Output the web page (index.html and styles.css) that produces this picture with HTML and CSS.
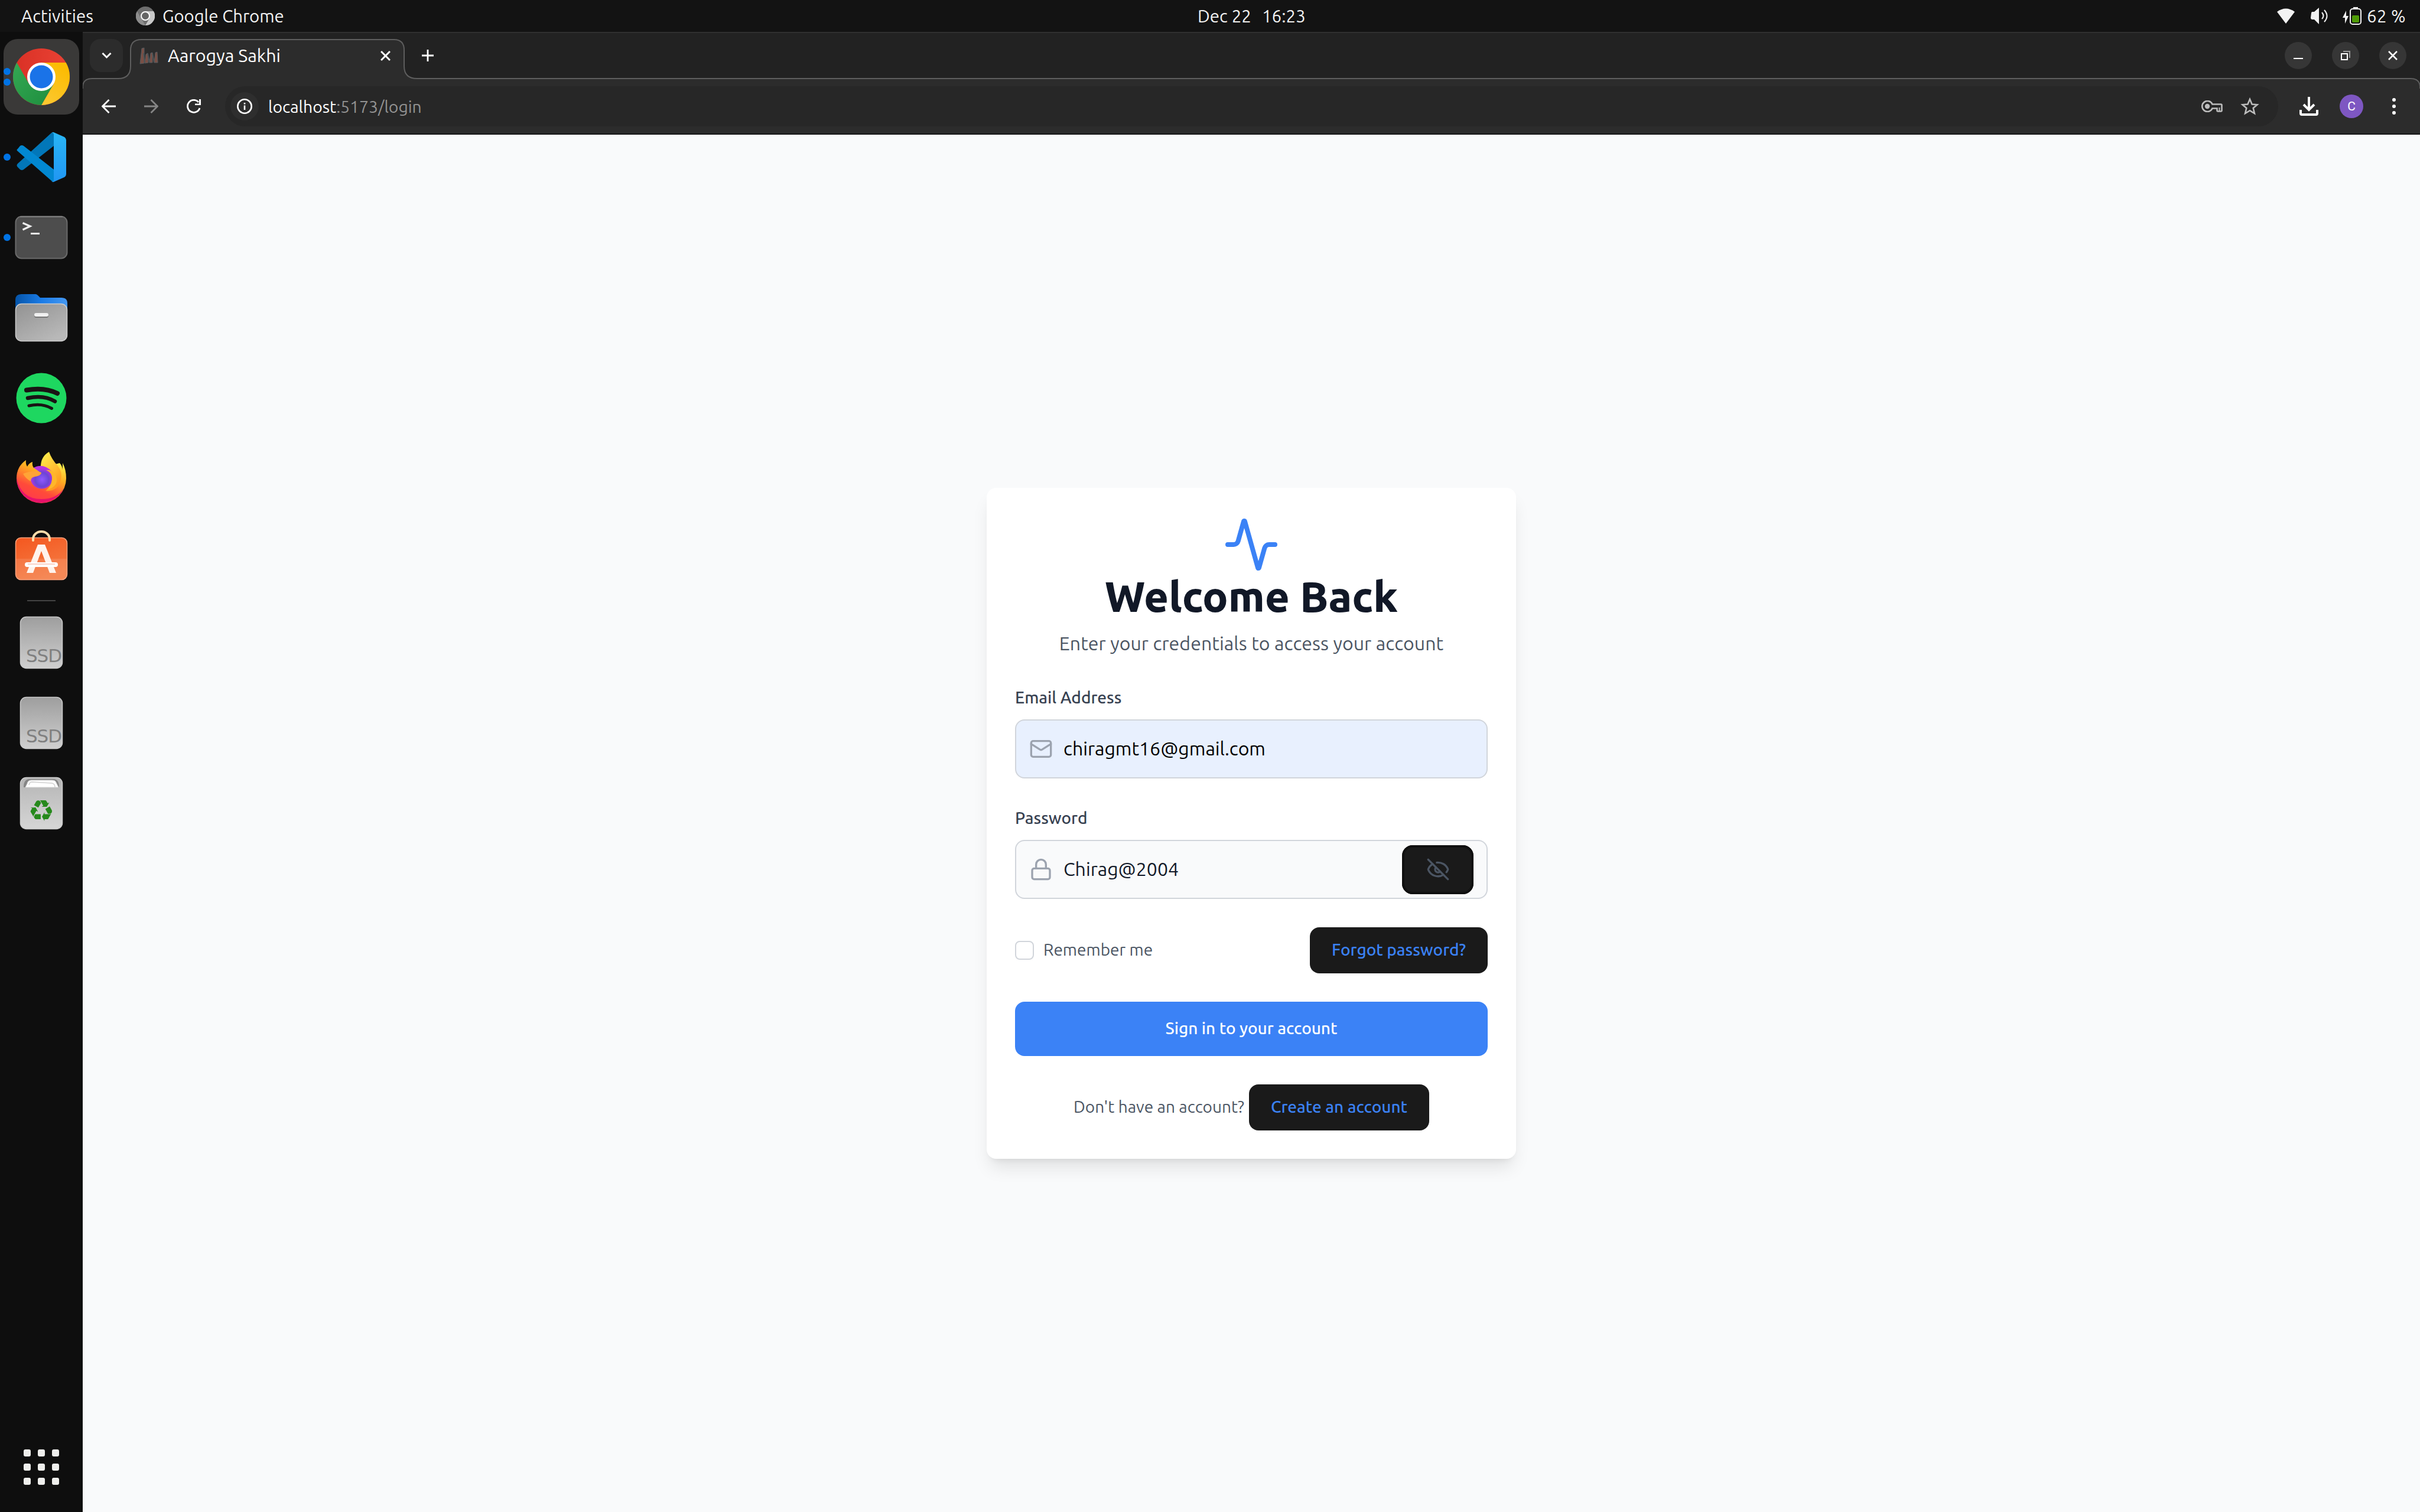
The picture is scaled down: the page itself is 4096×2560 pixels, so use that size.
FILE: index.html
```html
<!DOCTYPE html>
<html lang="en">
<head>
<meta charset="utf-8">
<title>Aarogya Sakhi</title>
<link rel="stylesheet" href="styles.css">
</head>
<body>
<div class="desktop">
  <header class="topbar">
    <span class="t activities">Activities</span>
    <svg class="app-icon" viewBox="0 0 32 32"><circle cx="16" cy="16" r="16" fill="#6e6e6e"/><path d="M16 8H30A16 16 0 0 1 16 32L23 20Z" fill="#c8c8c8"/><path d="M2 8L9 20L16 32A16 16 0 0 1 2 8Z" fill="#8d8d8d"/><circle cx="16" cy="16" r="7" fill="#666" stroke="#fff" stroke-width="2"/></svg>
    <span class="t app-name">Google Chrome</span>
    <div class="clock"><span class="t">Dec 22</span><span class="t">16:23</span></div>
    <div class="status">
      <svg class="st-wifi" viewBox="0 0 30 26"><path d="M0 6Q15-5 30 6L15 26Z" fill="#f2f2f2"/></svg>
      <svg class="st-vol" viewBox="0 0 30 28"><path d="M1 9Q1 7 3 7H6L14 0V28L6 20H3Q0 20 0 17Z" fill="#f2f2f2"/><path d="M19 8Q24 14 19 19M23 4Q32 14 23 24" fill="none" stroke="#f2f2f2" stroke-width="2"/></svg>
      <svg class="st-bat" viewBox="0 0 32 30"><path d="M6 6L0 18H4L4 28L10 15H6Z" fill="#f2f2f2"/><rect x="18" y="0" width="8" height="3" fill="#f2f2f2"/><rect x="13" y="3" width="18" height="26" rx="4" fill="none" stroke="#f2f2f2" stroke-width="2"/><rect x="16" y="14" width="12" height="12" rx="2" fill="#4e9a06"/></svg>
      <span class="t pct">62 %</span>
    </div>
  </header>
  <div class="main">
    <aside class="dock">
      <div class="tile active"><i class="dot up"></i><i class="dot down"></i>
        <svg viewBox="0 0 96 96"><defs><linearGradient id="cr"><stop stop-color="#d93025"/><stop offset="1" stop-color="#ea4335"/></linearGradient><linearGradient id="cg" x1="1" y1="1" x2="0" y2="0"><stop stop-color="#1e8e3e"/><stop offset="1" stop-color="#34a853"/></linearGradient><linearGradient id="cy" x1="0" y1="1" x2="0.5" y2="0"><stop stop-color="#fcc934"/><stop offset="1" stop-color="#fbbc04"/></linearGradient></defs><circle cx="48" cy="48" r="48" fill="url(#cr)"/><path d="M48 24H89.6A48 48 0 0 1 48 96L68.8 60Z" fill="url(#cy)"/><path d="M6.4 24A48 48 0 0 0 48 96L68.8 60L27.2 60Z" fill="url(#cg)"/><circle cx="48" cy="48" r="24" fill="#fff"/><circle cx="48" cy="48" r="19.5" fill="#1a73e8"/></svg>
      </div>
      <div class="tile"><i class="dot"></i>
        <svg viewBox="0 0 96 96"><defs><linearGradient id="vb" x2="0" y2="1"><stop stop-color="#29b6f6"/><stop offset="1" stop-color="#2196f3"/></linearGradient></defs><path d="M65 7L8 59Q5 62 8 65L12 69Q15 71 18 69L69 29V6Z" fill="#0277b9"/><path d="M8 34L12 29Q15 27 18 29L69 69V90Q67 90 65 88L8 38Q5 36 8 34Z" fill="#0288d1"/><path d="M65 6.500Q68 5 70 6.500L87 14Q90 16 90 19V77Q90 80 87 82L70 89.500Q68 91 65 89.500Q69 90 69 86V10Q69 6 65 6.500Z" fill="url(#vb)"/></svg>
      </div>
      <div class="tile"><i class="dot"></i>
        <svg viewBox="0 0 96 96"><rect x="4.500" y="12.500" width="87" height="71" rx="10" fill="#4d4d4d" stroke="#6b6b6b" stroke-width="2"/><path d="M12 13H84" stroke="#888" stroke-width="1.500"/><path d="M16.500 23.500L29 29L16.500 35M30 41.500H45" fill="none" stroke="#eee" stroke-width="3.200"/></svg>
      </div>
      <div class="tile">
        <svg viewBox="0 0 96 96"><defs><linearGradient id="fb"><stop stop-color="#0554a8"/><stop offset=".5" stop-color="#1a7be6"/><stop offset="1" stop-color="#4598f2"/></linearGradient><linearGradient id="fg" x2=".7" y2="1"><stop stop-color="#929292"/><stop offset="1" stop-color="#b9b9b9"/></linearGradient></defs><path d="M4 40V18Q4 8 14 8H38Q40 8 42 10L46 14H82Q92 14 92 23V40Z" fill="url(#fb)"/><rect x="4.500" y="24.500" width="87" height="63" rx="10" fill="url(#fg)" stroke="#ccc" stroke-width="1.500"/><rect x="36" y="41" width="24" height="7" rx="3" fill="#777"/><rect x="36" y="40" width="24" height="6" rx="3" fill="#f0f0f0"/></svg>
      </div>
      <div class="tile">
        <svg viewBox="0 0 96 96"><circle cx="48" cy="48" r="42.500" fill="#1ed760"/><g fill="none" stroke="#191414" stroke-linecap="round"><path d="M23 34.500Q53 29 75 40" stroke-width="8"/><path d="M25 48Q52 42 71 53.500" stroke-width="6.500"/><path d="M27 61Q49 56 65.500 65.500" stroke-width="5"/></g></svg>
      </div>
      <div class="tile">
        <svg viewBox="0 0 96 96"><defs><linearGradient id="ff" x1=".8" y1="0" x2=".3" y2="1"><stop stop-color="#fff44f"/><stop offset=".35" stop-color="#ffae21"/><stop offset=".7" stop-color="#ff4a3a"/><stop offset="1" stop-color="#ff3750"/></linearGradient><linearGradient id="fy" x2=".5" y2="1"><stop stop-color="#fff44f"/><stop offset="1" stop-color="#ff9a1f"/></linearGradient><radialGradient id="fp" cx=".5" cy=".6"><stop stop-color="#9059ff"/><stop offset=".6" stop-color="#6b46d4"/><stop offset="1" stop-color="#b833e1"/></radialGradient></defs><path d="M6 48Q6 28 22 17Q21 23 24 28Q27 22 33 20Q32 26 35 30Q47 25 60 27L79 22Q84 28 84 34V22Q90 33 90 48A42 42 0 0 1 6 48Z" fill="url(#ff)"/><path d="M6 48Q14 83 48 83Q74 83 86 65A42 42 0 0 1 6 48Z" fill="#e30b72" opacity=".85"/><path d="M47 28Q47 11 61 3Q65 15 76 27Q84 37 81 50Q76 71 55 69Q76 61 73 47Q71 35 58 34Z" fill="url(#fy)"/><path d="M35 30Q50 21 66 36Q73 49 61 61Q49 70 36 61Q27 52 31 44Q46 46 48 39Q42 35 35 30Z" fill="url(#fp)"/><path d="M17 40Q35 33 48 38Q45 44 37 45Q30 46 30 53Q21 48 17 40Z" fill="#ffa436"/><path d="M56 34Q67 38 66 50Q64 63 56 68Q78 62 73 45Q69 32 56 34Z" fill="#ffb62a"/></svg>
      </div>
      <div class="tile">
        <svg viewBox="0 0 96 96"><defs><linearGradient id="so" x2=".4" y2="1"><stop stop-color="#f4571f"/><stop offset="1" stop-color="#f47b43"/></linearGradient></defs><rect x="4.500" y="12.500" width="87" height="71" rx="9" fill="url(#so)" stroke="#f8a07a" stroke-width="1.500"/><path d="M5 48H91V75Q91 83 82 83H14Q5 83 5 75Z" fill="#fff" opacity=".1"/><path d="M34 17V15A14 13 0 0 1 62 15V17" fill="none" stroke="#fbdcaa" stroke-width="4" stroke-linecap="round"/><path d="M42 24H54L73 72H62L48 35L34 72H23Z" fill="#fff3ec"/><rect x="20" y="54" width="56" height="8" rx="4" fill="#fff"/><path d="M25 57H71" stroke="#fad0c4" stroke-width="2"/></svg>
      </div>
      <div class="rule"></div>
      <div class="tile">
        <svg viewBox="0 0 96 96"><defs><linearGradient id="sd" x2="0" y2="1"><stop stop-color="#9e9e9e"/><stop offset="1" stop-color="#cfcfcf"/></linearGradient></defs><rect x="12.500" y="4.500" width="71" height="87" rx="10" fill="url(#sd)" stroke="#c9c9c9" stroke-width="1.500"/><text class="ssd" x="22" y="81" textLength="61">SSD</text></svg>
      </div>
      <div class="tile">
        <svg viewBox="0 0 96 96"><rect x="12.500" y="4.500" width="71" height="87" rx="10" fill="url(#sd)" stroke="#c9c9c9" stroke-width="1.500"/><text class="ssd" x="22" y="81" textLength="61">SSD</text></svg>
      </div>
      <div class="tile">
        <svg viewBox="0 0 96 96"><defs><linearGradient id="tr" x2="0" y2="1"><stop stop-color="#b5b5b5"/><stop offset="1" stop-color="#d6d6d6"/></linearGradient></defs><rect x="12.500" y="4.500" width="71" height="87" rx="10" fill="url(#tr)" stroke="#ccc" stroke-width="1.500"/><path d="M18 21Q18 7 28 7H68Q78 7 78 21Z" fill="#858585"/><path d="M24 15Q25 9 31 9H66Q72 9 73 13L77 21H21Z" fill="#fff" stroke="#d5d5d5"/><path d="M27 17Q28 12 32 12L66 14Q71 15 71 21" fill="none" stroke="#d0d0d0" stroke-width="1.500"/><text class="recycle" x="48" y="78">♻</text></svg>
      </div>
      <svg class="grid-icon" viewBox="0 0 60 60" fill="#eeeeec"><rect width="12" height="12" rx="3"/><rect x="24" width="12" height="12" rx="3"/><rect x="48" width="12" height="12" rx="3"/><rect y="24" width="12" height="12" rx="3"/><rect x="24" y="24" width="12" height="12" rx="3"/><rect x="48" y="24" width="12" height="12" rx="3"/><rect y="48" width="12" height="12" rx="3"/><rect x="24" y="48" width="12" height="12" rx="3"/><rect x="48" y="48" width="12" height="12" rx="3"/></svg>
    </aside>
    <section class="browser">
      <div class="tabstrip">
        <svg class="tab-shape" viewBox="0 0 3956 96" preserveAspectRatio="none"><path d="M0 96V92Q1 79 16 79H60Q81 79 81 58V31Q81 13 99 13H527Q544 13 544 31V58Q544 79 566 79H3940Q3955 79 3956 92V96" fill="#2c2c2c" stroke="#5e5e5e" stroke-width="2"/></svg>
        <div class="tab-search"><svg viewBox="0 0 16 16"><path d="M1 4L8 11L15 4" fill="none" stroke="#fff" stroke-width="3"/></svg></div>
        <svg class="favicon" viewBox="0 0 32 32"><path d="M1 30L4 4L8 3L8 29ZM9 29L11 14L14 12L15 28ZM17 28L19 12L22 11L22 28ZM25 28L27 11L30 10L31 28Z" fill="#7a4f45" stroke="#565c60" stroke-width="1"/><path d="M7 12L9 29M14 13L17 28M22 12L25 28" stroke="#4d5457" stroke-width="2"/></svg>
        <span class="t tab-title">Aarogya Sakhi</span>
        <svg class="tab-close" viewBox="0 0 16 16"><path d="M1 1L15 15M15 1L1 15" stroke="#fff" stroke-width="2.800"/></svg>
        <svg class="tab-new" viewBox="0 0 20 20"><path d="M10 0V20M0 10H20" stroke="#fff" stroke-width="2.800"/></svg>
        <div class="window-buttons">
          <div class="wb"><svg viewBox="0 0 16 16"><path d="M0 13H16" stroke="#fff" stroke-width="2"/></svg></div>
          <div class="wb"><svg viewBox="0 0 16 16"><path d="M4 1H15V12" fill="none" stroke="#9a9a9a" stroke-width="2"/><rect x="1" y="5" width="10" height="10" fill="none" stroke="#fff" stroke-width="2"/></svg></div>
          <div class="wb"><svg viewBox="0 0 16 16"><path d="M1 1L15 15M15 1L1 15" stroke="#fff" stroke-width="2.500"/></svg></div>
        </div>
      </div>
      <div class="toolbar">
        <svg class="nav" viewBox="0 0 24 24"><path d="M24 12H2M12.500 1L1.500 12L12.500 23" fill="none" stroke="#fff" stroke-width="2.800"/></svg>
        <svg class="nav dim" viewBox="0 0 24 24"><path d="M0 12H22M11.500 1L22.500 12L11.500 23" fill="none" stroke="#858585" stroke-width="2.800"/></svg>
        <svg class="nav reload" viewBox="0 0 24 24"><path d="M22 15A10.500 10.500 0 1 1 20 5" fill="none" stroke="#fff" stroke-width="2.800"/><path d="M24 0V10H14V7.500H21V0Z" fill="#fff"/></svg>
        <div class="omnibox">
          <div class="site-info"><svg viewBox="0 0 26 26"><circle cx="13" cy="13" r="11.700" fill="none" stroke="#fff" stroke-width="2.600"/><path d="M13 11.500V19M13 7V9.500" stroke="#fff" stroke-width="2.600"/></svg></div>
          <span class="t url">localhost<span class="path">:5173/login</span></span>
          <svg class="key" viewBox="0 0 36 20"><path d="M18.500 6.500H33Q34.500 6.500 34.500 8V17Q34.500 18.500 33 18.500H28Q26.500 18.500 26.500 17V13.500H18.500A9 9 0 1 1 18.500 6.500Z" fill="none" stroke="#bdbdbd" stroke-width="2.600"/><circle cx="10" cy="10" r="4.200" fill="#bdbdbd"/><path d="M30.500 12V18" stroke="#bdbdbd" stroke-width="2"/></svg>
          <svg class="star" viewBox="0 0 32 30"><path d="M16 3L19.600 11.500L28.500 12.200L21.700 18L23.900 27L16 22.200L8.100 27L10.300 18L3.500 12.200L12.400 11.500Z" fill="none" stroke="#bdbdbd" stroke-width="2.600"/></svg>
        </div>
        <svg class="download" viewBox="0 0 32 32"><path d="M16 0V21M7 13L16 22L25 13" fill="none" stroke="#fff" stroke-width="4"/><path d="M2 22V28Q2 30 4 30H28Q30 30 30 28V22" fill="none" stroke="#fff" stroke-width="4"/></svg>
        <div class="avatar">C</div>
        <svg class="menu" viewBox="0 0 6 28" fill="#fff"><circle cx="3" cy="3" r="3"/><circle cx="3" cy="14" r="3"/><circle cx="3" cy="25" r="3"/></svg>
      </div>
      <main class="page">
        <form class="card">
          <svg class="activity" viewBox="0 0 24 24"><path d="M22 12h-2.480a2 2 0 0 0-1.930 1.460l-2.350 8.360a.25.25 0 0 1-.48 0L9.240 2.180a.25.25 0 0 0-.48 0l-2.350 8.360A2 2 0 0 1 4.490 12H2"/></svg>
          <h1><span class="t">Welcome Back</span></h1>
          <p class="lead"><span class="t">Enter your credentials to access your account</span></p>
          <label class="label"><span class="t">Email Address</span></label>
          <div class="field filled">
            <svg class="fi" viewBox="0 0 24 24"><rect width="20" height="16" x="2" y="4" rx="2"/><path d="m22 7-8.970 5.700a1.940 1.940 0 0 1-2.060 0L2 7"/></svg>
            <span class="t">chiragmt16@gmail.com</span>
          </div>
          <label class="label"><span class="t">Password</span></label>
          <div class="field">
            <svg class="fi" viewBox="0 0 24 24"><rect width="18" height="11" x="3" y="11" rx="2" ry="2"/><path d="M7 11V7a5 5 0 0 1 10 0v4"/></svg>
            <span class="t">Chirag@2004</span>
            <button type="button" class="eye"><svg viewBox="0 0 24 24"><path d="M10.733 5.076a10.744 10.744 0 0 1 11.205 6.575 1 1 0 0 1 0 .696 10.747 10.747 0 0 1-1.444 2.490"/><path d="M14.084 14.158a3 3 0 0 1-4.242-4.242"/><path d="M17.479 17.499a10.750 10.750 0 0 1-15.417-5.151 1 1 0 0 1 0-.696 10.750 10.750 0 0 1 4.446-5.143"/><path d="m2 2 20 20"/></svg></button>
          </div>
          <div class="options">
            <span class="check"></span><span class="t">Remember me</span>
            <button type="button" class="dark forgot"><span class="t">Forgot password?</span></button>
          </div>
          <button type="button" class="signin"><span class="t">Sign in to your account</span></button>
          <div class="signup"><span class="t ask">Don't have an account?</span><button type="button" class="dark create"><span class="t">Create an account</span></button></div>
        </form>
      </main>
    </section>
  </div>
</div>
</body>
</html>
```
FILE: styles.css
```css
* { box-sizing: border-box; }
html, body { margin: 0; width: 4096px; height: 2560px; overflow: hidden; }
body { font-family: Ubuntu, "Noto Sans", sans-serif; font-size: 28px; }
svg { display: block; flex: none; }
h1, p { margin: 0; }
button { font-family: inherit; border: 0; padding: 0; display: flex; align-items: center; justify-content: center; }
.t { white-space: pre; flex: none; }

.desktop { display: flex; flex-direction: column; width: 4096px; height: 2560px; }
.topbar { position: relative; display: flex; align-items: center; height: 54px; background: #131313; color: #f2f2f2; padding: 0 25px 0 36px; font-size: 29.33px; flex: none; }
.activities { width: 122px; letter-spacing: .2px; }
.app-icon { width: 32px; height: 32px; margin-left: 72px; }
.app-name { margin-left: 13px; }
.clock { position: absolute; left: 2027px; display: flex; gap: 18px; letter-spacing: .1px; }
.status { margin-left: auto; display: flex; align-items: center; }
.st-wifi { width: 30px; height: 26px; }
.st-vol { width: 30px; height: 28px; margin-left: 27px; }
.st-bat { width: 32px; height: 30px; margin-left: 24px; }
.pct { margin-left: 9px; width: 65px; letter-spacing: .4px; }

.main { display: flex; flex: 1; min-height: 0; }
.dock { width: 140px; background: #0e0e0e; display: flex; flex-direction: column; align-items: center; padding: 12px 0 46px; flex: none; }
.tile { position: relative; width: 128px; height: 128px; border-radius: 24px; margin-bottom: 8px; display: flex; align-items: center; justify-content: center; flex: none; }
.tile svg { width: 96px; height: 96px; }
.tile.active { background: #3a3938; }
.dot { position: absolute; left: 0; top: 58px; width: 12px; height: 12px; border-radius: 50%; background: #0073e5; }
.dot.up { top: 49px; }
.dot.down { top: 67px; }
.rule { width: 48px; height: 2px; margin: -2px 0 6px; background: #444; flex: none; }
.ssd { font: 31px "DejaVu Sans", sans-serif; fill: #808080; }
.recycle { font: 50px "DejaVu Sans", sans-serif; fill: #26891c; text-anchor: middle; }
.grid-icon { width: 60px; height: 60px; margin-top: auto; }

.browser { flex: 1; display: flex; flex-direction: column; min-width: 0; background: #222; }
.tabstrip { position: relative; z-index: 0; height: 80px; background: #222; border-top: 2px solid #303030; padding-bottom: 2px; display: flex; align-items: center; flex: none; }
.tab-shape { position: absolute; left: 0; top: -2px; width: 3956px; height: 96px; z-index: -1; }
.tab-search { width: 56px; height: 56px; margin-left: 12px; border-radius: 18px; background: #2c2c2c; display: flex; align-items: center; justify-content: center; }
.tab-search svg { width: 17px; height: 16px; }
.favicon { width: 32px; height: 32px; margin-left: 28px; }
.tab-title { margin-left: 16px; width: 191px; color: #fff; font-size: 30.4px; }
.tab-close { width: 17px; height: 17px; margin-left: 169px; }
.tab-new { width: 20px; height: 20px; margin-left: 53px; }
.window-buttons { margin-left: auto; display: flex; gap: 34px; padding-right: 23px; }
.wb { width: 46px; height: 46px; border-radius: 50%; background: #363636; display: flex; align-items: center; justify-content: center; }
.wb svg { width: 16px; height: 16px; }
.toolbar { position: relative; height: 94px; background: linear-gradient(#2c2c2c, #2c2c2c) 0 16px no-repeat; border-bottom: 2px solid #161616; display: flex; align-items: center; padding: 0 41px 0 32px; flex: none; }
.nav { width: 24px; height: 24px; margin-right: 48px; }
.reload { margin-right: 41px; }
.omnibox { flex: 1; height: 68px; border-radius: 34px; background: #272727; display: flex; align-items: center; padding: 0 32px 0 9px; margin-right: 36px; }
.site-info { width: 48px; height: 48px; border-radius: 50%; background: #2e2e2e; display: flex; align-items: center; justify-content: center; }
.site-info svg { width: 26px; height: 26px; }
.url { margin-left: 16px; color: #fff; font-size: 28.3px; }
.path { color: #929292; }
.key { width: 36px; height: 20px; margin-left: auto; }
.star { width: 32px; height: 30px; margin-left: 30px; }
.download { width: 32px; height: 32px; margin-right: 36px; }
.avatar { width: 40px; height: 40px; border-radius: 50%; background: #7e57c2; color: #fff; font: 21px/40px Roboto, sans-serif; text-align: center; margin-right: 49px; }
.menu { width: 6px; height: 28px; }

.page { flex: 1; background: #f9fafb; display: flex; align-items: center; justify-content: center; }
.card { width: 896px; height: 1136px; background: #fff; border-radius: 16px; padding: 48px; box-shadow: 0 20px 30px -6px rgba(0,0,0,.1), 0 8px 12px -8px rgba(0,0,0,.1); display: flex; flex-direction: column; color: #4b5563; font-weight: 420; }
.card .t { padding-bottom: 2px; }
.activity { width: 96px; height: 96px; margin: 0 auto; fill: none; stroke: #3b82f6; stroke-width: 2; stroke-linecap: round; stroke-linejoin: round; }
h1 { display: flex; justify-content: center; height: 80px; font-size: 72px; line-height: 80px; font-weight: 800; color: #111827; }
.lead { display: flex; align-items: center; justify-content: center; height: 48px; font-size: 32px; line-height: 48px; margin-top: 16px; letter-spacing: .09px; }
.label { margin-top: 48px; height: 40px; font-size: 28px; line-height: 40px; font-weight: 550; color: #374151; display: flex; align-items: center; }
.field { margin-top: 16px; height: 100px; border: 2px solid #d1d5db; border-radius: 16px; background: #f9fafb; display: flex; align-items: center; padding: 0 22px; font-size: 32px; line-height: 48px; color: #111827; flex: none; }
.filled { background: #e8f0fe; color: #000; }
.fi { width: 40px; height: 40px; margin-right: 18px; fill: none; stroke: #9ca3af; stroke-width: 2; stroke-linecap: round; stroke-linejoin: round; }
.eye { width: 121px; height: 83px; margin-left: auto; border-radius: 18px; background: #1a1a1a; box-shadow: inset 0 0 0 4px #101010, 0 0 0 2px #fff; }
.eye svg { width: 40px; height: 40px; fill: none; stroke: #4b5563; stroke-width: 2; stroke-linecap: round; stroke-linejoin: round; }
.options { margin-top: 48px; height: 78px; display: flex; align-items: center; font-size: 28px; line-height: 40px; flex: none; }
.check { width: 32px; height: 32px; border: 2px solid #d1d5db; border-radius: 8px; background: #fff; margin-right: 16px; }
.dark { height: 78px; border-radius: 16px; background: #1a1a1a; color: #3b82f6; font-size: 28px; line-height: 40px; font-weight: 550; flex: none; }
.forgot { width: 301px; margin-left: auto; }
.signin { margin-top: 48px; height: 92px; border-radius: 16px; background: #3b82f6; color: #fff; font-size: 28px; line-height: 40px; font-weight: 550; flex: none; }
.signup { margin-top: 48px; height: 78px; display: flex; align-items: center; padding-left: 99px; font-size: 28px; line-height: 40px; flex: none; }
.ask { width: 297px; }
.create { width: 305px; }
```
